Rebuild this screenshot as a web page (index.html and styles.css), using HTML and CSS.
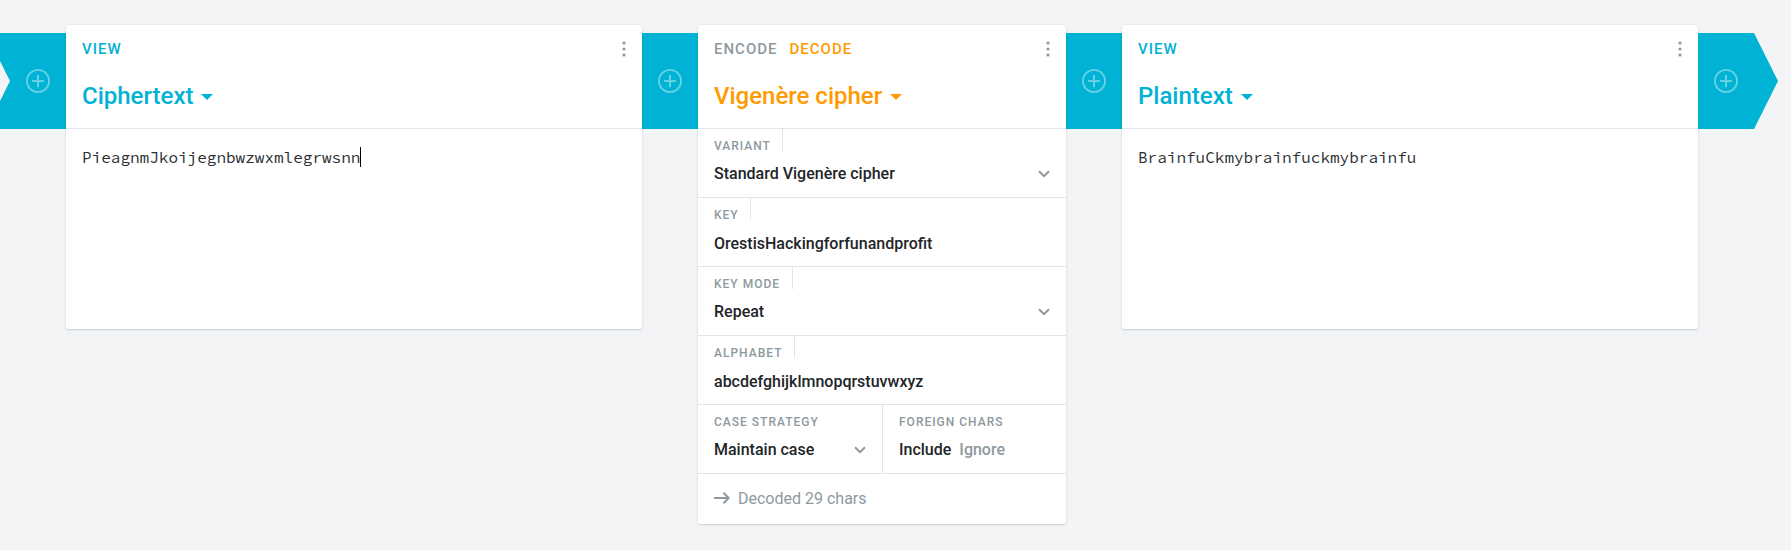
FILE: index.html
```html
<!DOCTYPE html>
<html lang="en">
<head>
<meta charset="utf-8">
<title>Vigenère cipher pipeline</title>
<link rel="stylesheet" href="styles.css">
</head>
<body>
<svg class="defs" width="0" height="0">
  <symbol id="plus" viewBox="0 0 24 24"><circle cx="12" cy="12" r="11.1" fill="none" stroke="currentColor" stroke-width="1.8"/><path d="M12 6v12M6 12h12" fill="none" stroke="currentColor" stroke-width="2"/></symbol>
  <symbol id="dots" viewBox="0 0 4 16"><circle cx="2" cy="2" r="1.6"/><circle cx="2" cy="8" r="1.6"/><circle cx="2" cy="14" r="1.6"/></symbol>
  <symbol id="chevron" viewBox="0 0 12 8"><path d="M1 1.2l5 5 5-5" fill="none" stroke="currentColor" stroke-width="2"/></symbol>
  <symbol id="arrow" viewBox="0 0 16 12"><path d="M0 6h15M9.5 .8L14.7 6l-5.2 5.2" fill="none" stroke="currentColor" stroke-width="2"/></symbol>
  <symbol id="caret" viewBox="0 0 12 6"><path d="M0 0h12L6 6z"/></symbol>
</svg>
<main class="pipeline">
  <div class="pipe pipe-first"><svg class="plus"><use href="#plus"/></svg></div>
  <section class="brick viewer">
    <header class="head blue">
      <div class="modes"><span class="mode">VIEW</span><svg class="dots"><use href="#dots"/></svg></div>
      <h2 class="title">Ciphertext<svg class="caret"><use href="#caret"/></svg></h2>
    </header>
    <div class="text">PieagnmJkoijegnbwzwxmlegrwsnn<span class="cursor"></span></div>
  </section>
  <div class="pipe"><svg class="plus"><use href="#plus"/></svg></div>
  <section class="brick encoder">
    <header class="head orange">
      <div class="modes"><span class="mode inactive">ENCODE</span><span class="mode">DECODE</span><svg class="dots"><use href="#dots"/></svg></div>
      <h2 class="title">Vigenère cipher<svg class="caret"><use href="#caret"/></svg></h2>
    </header>
    <div class="field"><span class="label ruled">VARIANT</span><div class="value">Standard Vigenère cipher<svg class="chevron"><use href="#chevron"/></svg></div></div>
    <div class="field"><span class="label ruled">KEY</span><div class="value typed">OrestisHackingforfunandprofit</div></div>
    <div class="field"><span class="label ruled">KEY MODE</span><div class="value">Repeat<svg class="chevron"><use href="#chevron"/></svg></div></div>
    <div class="field"><span class="label ruled">ALPHABET</span><div class="value typed">abcdefghijklmnopqrstuvwxyz</div></div>
    <div class="pair">
      <div class="field"><span class="label">CASE STRATEGY</span><div class="value">Maintain case<svg class="chevron"><use href="#chevron"/></svg></div></div>
      <div class="field"><span class="label">FOREIGN CHARS</span><div class="value">Include<span class="option">Ignore</span></div></div>
    </div>
    <footer class="status"><svg class="arrow"><use href="#arrow"/></svg>Decoded 29 chars</footer>
  </section>
  <div class="pipe"><svg class="plus"><use href="#plus"/></svg></div>
  <section class="brick viewer">
    <header class="head blue">
      <div class="modes"><span class="mode">VIEW</span><svg class="dots"><use href="#dots"/></svg></div>
      <h2 class="title">Plaintext<svg class="caret"><use href="#caret"/></svg></h2>
    </header>
    <div class="text">BrainfuCkmybrainfuckmybrainfu</div>
  </section>
  <div class="pipe pipe-last"><svg class="plus"><use href="#plus"/></svg></div>
</main>
</body>
</html>
```
FILE: styles.css
```css
* { box-sizing: border-box; }
body {
  margin: 0;
  min-height: 550px;
  background: #f2f4f6;
  font-family: Roboto, "Liberation Sans", sans-serif;
  overflow: hidden;
}
svg { display: block; flex: none; fill: currentColor; }
.defs { position: absolute; }
.pipeline { display: flex; align-items: flex-start; padding-top: 25px; }
.pipe {
  flex: none;
  width: 56px;
  height: 96px;
  margin-top: 8px;
  padding: 36px 16px;
  background: #00b2d4;
  color: rgba(255, 255, 255, .4);
}
.pipe-first {
  width: 66px;
  padding-left: 26px;
  clip-path: polygon(0 0, 100% 0, 100% 100%, 0 100%, 0 68px, 10px 48px, 0 28px);
}
.pipe-last { width: 80px; clip-path: polygon(0 0, 56px 0, 100% 50%, 56px 100%, 0 100%); }
.plus { width: 24px; height: 24px; }
.brick {
  flex: none;
  position: relative;
  background: #fff;
  border-radius: 2px;
  box-shadow: 0 1px 2px rgba(30, 50, 60, .16), 0 0 2px rgba(30, 50, 60, .08);
}
.viewer { width: 576px; height: 304px; }
.encoder { width: 368px; height: 499px; }
.head { height: 104px; padding: 14px 16px 0; border-bottom: 1px solid #e1e7ec; }
.blue { color: #00b2d4; }
.orange { color: #ff9a00; }
.modes { display: flex; align-items: center; height: 20px; gap: 12px; }
.mode { font-size: 15px; font-weight: 500; letter-spacing: 1px; line-height: 20px; }
.inactive { color: #8e999f; }
.dots { width: 4px; height: 16px; margin-left: auto; color: #8e999f; }
.title { display: flex; align-items: center; margin: 21px 0 0; font-size: 24px; font-weight: 500; line-height: 32px; }
.caret { width: 12px; height: 6px; margin: 1px 0 0 8px; }
.text {
  display: flex;
  align-items: center;
  height: 24px;
  margin: 16px 16px 0;
  color: #2d3033;
  font: 16px/24px "Source Code Pro", "Noto Sans Mono CJK SC", "DejaVu Sans Mono", monospace;
}
.cursor { width: 1px; height: 20px; background: #000; }
.field { height: 69px; padding: 0 16px; border-bottom: 1px solid #e1e5e9; }
.label {
  display: inline-block;
  height: 22px;
  padding-top: 9px;
  color: #8e999f;
  font-size: 12px;
  font-weight: 500;
  letter-spacing: 1px;
  line-height: 16px;
  vertical-align: top;
}
.ruled { padding-right: 11.5px; border-right: 1px solid #e1e5e9; }
.value { display: flex; align-items: center; height: 24px; margin-top: 10px; color: #222528; font-size: 16px; font-weight: 500; }
.typed { margin-top: 11px; }
.chevron { width: 12px; height: 8px; margin: 2px 0 0 auto; color: #8e999f; }
.pair { display: grid; grid-template-columns: 185px 1fr; }
.pair .field:first-child { border-right: 1px solid #e1e5e9; }
.option { margin-left: 8px; color: #8e999f; }
.status { display: flex; align-items: center; gap: 8px; height: 50px; padding: 0 16px 2px; color: #8e999f; font-size: 16px; }
.arrow { width: 16px; height: 12px; }
```
